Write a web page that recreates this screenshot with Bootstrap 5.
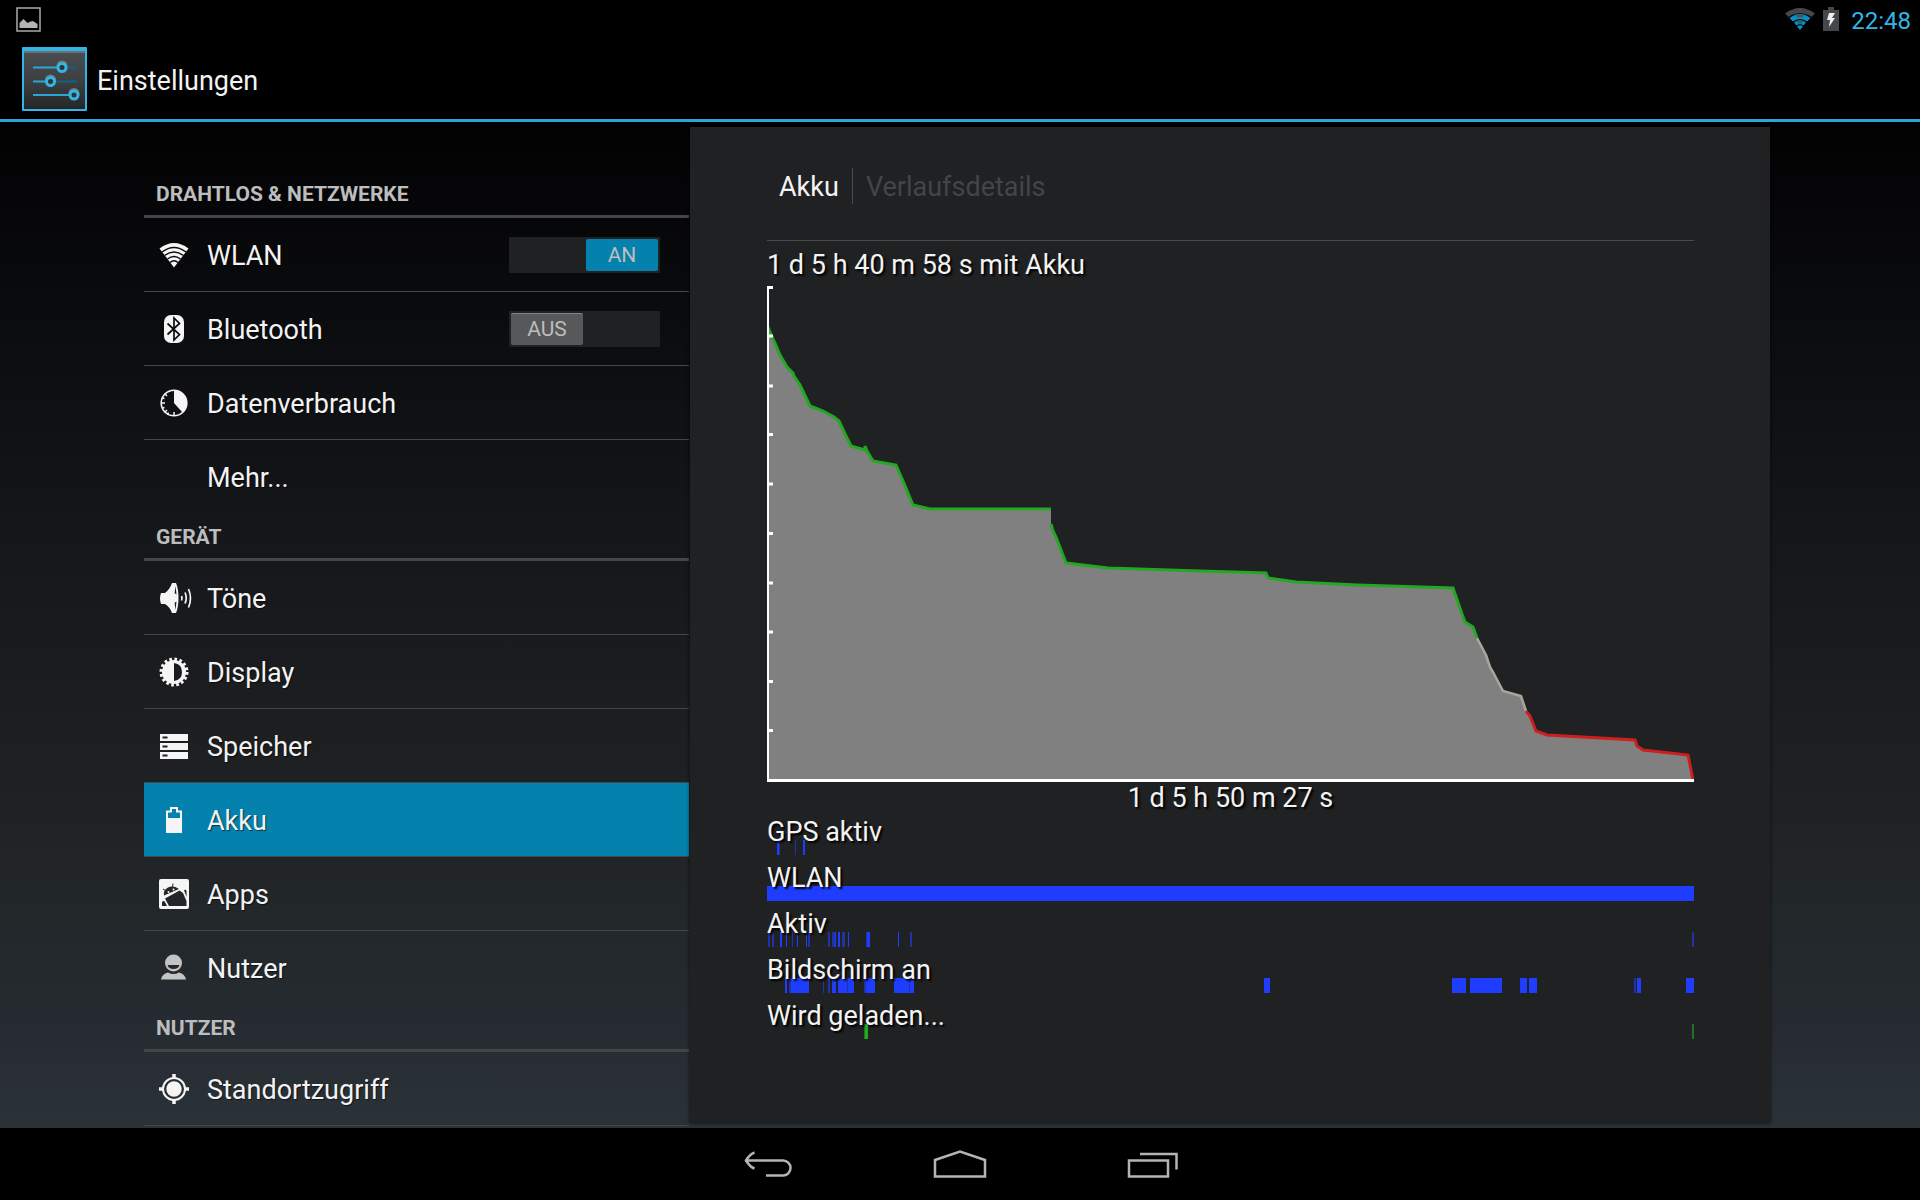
<!DOCTYPE html>
<html lang="de">
<head>
<meta charset="utf-8">
<meta name="viewport" content="width=device-width, initial-scale=1">
<title>Einstellungen</title>
<link rel="stylesheet" href="https://cdn.jsdelivr.net/npm/bootstrap@5.3.0/dist/css/bootstrap.min.css">
<style>
  :root { --holo: #33b5e5; --holo-dark: #0581ad; --bs-body-font-family: Roboto, "Noto Sans", sans-serif; }
  body { background: #000; color: #f3f3f3; font-size: 27px; line-height: 32px; }
  a { color: inherit; text-decoration: none; }
  .statusbar { height: 38px; padding: 0 9px 0 16px; color: var(--holo); font-size: 24px; }
  .statusbar svg, .actionbar svg, .entry svg, .sysnav svg { display: block; flex: none; }
  .actionbar { height: 84px; padding: 0 22px; border-bottom: 3px solid #2ba6d4; }
  .app-title { font-size: 27px; line-height: 32px; padding: 4px 0 0 1px; }
  .stage { display: grid; grid-template-columns: 546fr 1080fr; background: linear-gradient(#020203 0, #14161a 40%, #1d1f21 62%, #22272a 78%, #262b31 90%, #2a3238 100%); padding: 0 150px 0 144px; min-height: 0; }
  .side { min-width: 0; padding: 49px 1px 0 0; overflow: hidden; }
  .panel { min-width: 0; margin: 5px 0; background: #202122; padding: 0 76px 0 77px; box-shadow: 0 0 3px 1px rgba(0,0,0,.45); overflow: hidden; }
  .section-title { height: 47px; margin: 0; padding: 2px 12px 0; font-size: 21px; line-height: 24px; font-weight: 700; color: #bdbdbd; border-bottom: 3px solid #43474a; }
  .entry { height: 74px; padding: 0 29px 0 12px; border-bottom: 1px solid #43474a; }
  .entry.no-line { border-bottom-color: transparent; }
  .entry a { gap: 15px; text-shadow: 1px 1px 1px rgba(0,0,0,.6); }
  .entry a span:last-child { padding-top: 2px; }
  .entry.selected { background: var(--holo-dark); }
  .icon-slot { width: 36px; height: 36px; padding: 3px; flex: none; }
  .toggle { width: 151px; height: 36px; padding: 2px; background: #202123; cursor: pointer; }
  .toggle input { position: absolute; opacity: 0; inset: 0; }
  .toggle .thumb { width: 72px; height: 32px; border-radius: 2px; background: #56585a; color: #bdbdbd; font-size: 21px; line-height: 32px; text-align: center; box-shadow: inset 0 2px 0 -1px #808284; }
  .toggle input:checked ~ .thumb { margin-left: auto; background: var(--holo-dark); box-shadow: none; }
  .toggle .word-on, .toggle input:checked ~ .thumb .word-off { display: none; }
  .toggle input:checked ~ .thumb .word-on { display: inline; }
  .crumbs { padding: 41px 12px 36px; border-bottom: 1px solid #484a4c; }
  .crumbs a { line-height: 34px; padding-top: 2px; }
  .crumbs a + a { color: #434547; border-left: 1px solid #484a4c; margin-left: 13px; padding-left: 13px; }
  .shadowed { text-shadow: 2px 2px 2px #000; }
  .since { padding-top: 8px; margin-bottom: 3px; }
  .plot { display: block; width: 100%; height: 498px; }
  .lane { height: 46px; }
  .lane span { position: relative; z-index: 1; display: block; }
  .lane svg { display: block; width: 100%; height: 15px; margin-top: -8px; }
  .lanes { margin-top: 2px; }
  .sysnav { height: 72px; padding-top: 2px; }
  .sysnav button { width: 192px; border: 0; background: none; }
</style>
<script src="https://cdn.jsdelivr.net/npm/bootstrap@5.3.0/dist/js/bootstrap.bundle.min.js"></script>
</head>
<body class="vh-100 d-flex flex-column overflow-hidden">

<div class="statusbar d-flex align-items-center justify-content-between flex-shrink-0">
  <svg width="25" height="25" viewBox="0 0 25 25"><rect x="1" y="1" width="23" height="23" fill="none" stroke="#aaa" stroke-width="1.5"/><path d="M3.500 21v-5l2-2 2-2 3 3 1 1 2-1 3-1 2 1 3 2v4z" fill="#b4b4b4"/></svg>
  <div class="d-flex align-items-center">
    <svg width="30" height="23" viewBox="0 0 30 23" class="me-2"><path d="M0 5.500Q15-5.500 30 5.500L26.500 9Q15 1.500 3.500 9z" fill="#45484b"/><g fill="#0a8fc4"><path d="M4.500 10Q15 2 25.500 10L22 13.500Q15 8.500 8 13.500z"/><path d="M9 14.500Q15 10 21 14.500L18.500 17.500Q15 15 11.500 17.500z"/><path d="M12 18.500Q15 16 18 18.500L15 22z"/></g><path d="M11 6.500h8l-1 3h-6zM12 12.500h6l-1 3h-4z" fill="#45565f"/></svg>
    <svg width="16" height="24" viewBox="0 0 16 24" class="me-2"><path d="M0 3h5V0h6v3h5v21H0z" fill="#45484b"/><path d="M6 6h6l-3 5h3l-6 9 1-7H4z" fill="#eee"/></svg>
    <span class="ps-1 pt-1">22:48</span>
  </div>
</div>

<header class="actionbar d-flex align-items-center flex-shrink-0">
  <svg width="66" height="66" viewBox="0 0 66 66" class="me-2">
    <defs><linearGradient id="plate" x2="0" y2="1"><stop offset="0" stop-color="#4b4e50"/><stop offset=".55" stop-color="#3c3f41"/><stop offset="1" stop-color="#232526"/></linearGradient></defs>
    <rect x="0" y="1" width="65" height="64" rx="1" fill="#33b5e5"/><rect x="2" y="5" width="61" height="58" fill="url(#plate)"/><path d="M2 6h61" stroke="#8d9193"/>
    <g stroke-width="2" fill="none"><path d="M34 21.500h21M22 35.500h33M46 49h9" stroke="#11617f"/><path d="M11 21.500h26M11 35.500h14M11 49h38" stroke="#2ba6d4"/>
    <g stroke="#77797b" stroke-width="3"><circle cx="40" cy="20" r="4"/><circle cx="28.500" cy="34" r="4"/><circle cx="52" cy="47.500" r="4"/></g>
    <g stroke="#33b5e5" stroke-width="3" fill="#333"><circle cx="40" cy="21.500" r="4"/><circle cx="28.500" cy="35.500" r="4"/><circle cx="52" cy="49" r="4"/></g></g>
  </svg>
  <h1 class="app-title m-0 fw-normal">Einstellungen</h1>
</header>

<main class="stage flex-grow-1">
  <nav class="side" aria-label="Einstellungen">
    <h2 class="section-title d-flex align-items-center">DRAHTLOS &amp; NETZWERKE</h2>
    <div class="entry d-flex align-items-center">
      <a href="#wlan" class="d-flex align-items-center flex-grow-1">
        <svg class="icon-slot" viewBox="0 0 30 30"><path d="M.500 8.500Q15-2.500 29.500 8.500L15 27.500z" fill="#f5f5f5"/><g fill="none" stroke="#0b0c0e" stroke-width="1.500"><path d="M3 12Q15 3 27 12M5.500 15.500Q15 8.500 24.500 15.500M8.500 19Q15 14 21.500 19M11 22.500Q15 19 19 22.500"/></g></svg>
        <span>WLAN</span></a>
      <label class="toggle position-relative d-flex"><input type="checkbox" role="switch" aria-label="WLAN" checked><span class="thumb"><span class="word-on">AN</span><span class="word-off">AUS</span></span></label>
    </div>
    <div class="entry d-flex align-items-center">
      <a href="#bluetooth" class="d-flex align-items-center flex-grow-1">
        <svg class="icon-slot" viewBox="0 0 30 30"><rect x="5" y="1" width="20" height="28" rx="7" fill="#f5f5f5"/><path d="M8.500 9.500l12 11L15 26V4l5.500 5.500-12 11" fill="none" stroke="#0b0c0e" stroke-width="1.700"/></svg>
        <span>Bluetooth</span></a>
      <label class="toggle position-relative d-flex"><input type="checkbox" role="switch" aria-label="Bluetooth"><span class="thumb"><span class="word-on">AN</span><span class="word-off">AUS</span></span></label>
    </div>
    <div class="entry d-flex align-items-center">
      <a href="#daten" class="d-flex align-items-center flex-grow-1">
        <svg class="icon-slot" viewBox="0 0 30 30"><circle cx="15" cy="15" r="12.800" fill="none" stroke="#f5f5f5" stroke-width="1.600"/><path d="M15 15V2a13 13 0 0 1 8.500 22.500z" fill="#f5f5f5"/><path d="M15 28v-4M2 15h4M5.500 5.500l2.500 2.500M5.500 24.500l2.500-2.500M8.500 26.500l1-2M3.500 20l2-.500M3.500 10l2 .500" stroke="#f5f5f5" stroke-width="1.500"/></svg>
        <span>Datenverbrauch</span></a>
    </div>
    <div class="entry no-line d-flex align-items-center">
      <a href="#mehr" class="d-flex align-items-center flex-grow-1"><span class="icon-slot"></span><span>Mehr...</span></a>
    </div>

    <h2 class="section-title d-flex align-items-center">GERÄT</h2>
    <div class="entry d-flex align-items-center">
      <a href="#toene" class="d-flex align-items-center flex-grow-1">
        <svg class="icon-slot overflow-visible" viewBox="0 0 30 30"><path d="M2 10h4Q11 6 13 0h4Q19.500 6 19.500 15T17 30h-4Q11 24 6 21H2Q1 18 1 15.500T2 10z" fill="#f5f5f5"/><path d="M16.500 3Q14.500 15 16.500 27 18.500 15 16.500 3z" fill="#191b1d"/><path d="M15 10.500a4 4.500 0 0 1 0 9z" fill="#f5f5f5"/><path d="M22.500 13q1 2 0 4.500M26 9.500q2.500 5.500 0 11M29.500 6q4 9 0 18.500" fill="none" stroke="#f5f5f5" stroke-width="1.700"/></svg>
        <span>Töne</span></a>
    </div>
    <div class="entry d-flex align-items-center">
      <a href="#display" class="d-flex align-items-center flex-grow-1">
        <svg class="icon-slot" viewBox="0 0 30 30"><circle cx="15" cy="15" r="12.500" fill="none" stroke="#f5f5f5" stroke-width="4" stroke-dasharray="2.600 2.309"/><circle cx="15" cy="15" r="12" fill="#f5f5f5"/><path d="M15 6q8 1 8 9t-8 9z" fill="#191b1d"/></svg>
        <span>Display</span></a>
    </div>
    <div class="entry d-flex align-items-center">
      <a href="#speicher" class="d-flex align-items-center flex-grow-1">
        <svg class="icon-slot" viewBox="0 0 30 30"><path d="M1 3h28v7H1zM1 12h28v7H1zM1 21h28v7H1z" fill="#f5f5f5"/><path d="M3.500 6.500h5M3.500 15.500h5M3.500 24.500h5" stroke="#222" stroke-width="1.800"/></svg>
        <span>Speicher</span></a>
    </div>
    <div class="entry selected d-flex align-items-center">
      <a href="#akku" class="d-flex align-items-center flex-grow-1" aria-current="page">
        <svg class="icon-slot" viewBox="0 0 30 30"><path d="M7 28V5.500h4V2h8v3.500h4V28z" fill="#f5f5f5"/><path d="M9 7.500h4V4h4v3.500h4V13H9z" fill="#0581ad"/></svg>
        <span>Akku</span></a>
    </div>
    <div class="entry d-flex align-items-center">
      <a href="#apps" class="d-flex align-items-center flex-grow-1">
        <svg class="icon-slot" viewBox="0 0 30 30"><rect x="0" y="0" width="30" height="30" rx="2" fill="#f5f5f5"/><g fill="#222628"><path d="M5 16.500Q4 11 9 8.500T20 10z"/><path d="M6 19.500L20.500 11.500 24 14l3.500 8v5H10z"/><path d="M3 23q2-2 3 0l2 4H3z"/><path d="M25 11q2-1 2.500 1v6z"/></g><path d="M13.500 8.500l.500-4M7 12L4 10" stroke="#222628"/><circle cx="9.500" cy="13" r="1" fill="#f5f5f5"/><circle cx="14.500" cy="10.500" r="1" fill="#f5f5f5"/></svg>
        <span>Apps</span></a>
    </div>
    <div class="entry no-line d-flex align-items-center">
      <a href="#nutzer" class="d-flex align-items-center flex-grow-1">
        <svg class="icon-slot" viewBox="0 0 30 30"><ellipse cx="14.500" cy="10" rx="8.500" ry="8.500" fill="#c4c4c4"/><path d="M8.500 12h12q-1 4-6 4t-6-4z" fill="#25292c"/><path d="M2 26.500q1-5.500 7-7 5.500 3 11 0 6 1.500 7 7z" fill="#c4c4c4"/></svg>
        <span>Nutzer</span></a>
    </div>

    <h2 class="section-title d-flex align-items-center">NUTZER</h2>
    <div class="entry d-flex align-items-center">
      <a href="#standort" class="d-flex align-items-center flex-grow-1">
        <svg class="icon-slot" viewBox="0 0 30 30"><circle cx="15" cy="15" r="11" fill="none" stroke="#f5f5f5" stroke-width="2"/><circle cx="15" cy="15" r="7.700" fill="#f5f5f5"/><path d="M15 0v5M15 25v5M0 15h5M25 15h5" stroke="#f5f5f5" stroke-width="3.500"/></svg>
        <span>Standortzugriff</span></a>
    </div>
  </nav>

  <section class="panel">
    <div class="crumbs d-flex"><a href="#akku">Akku</a><a href="#verlauf">Verlaufsdetails</a></div>
    <div class="since shadowed">1 d 5 h 40 m 58 s mit Akku</div>
    <svg class="plot" viewBox="767 284 927 498" preserveAspectRatio="none" role="img" aria-label="Akkuverlauf">
      <path fill="#808080" d="M768 780V327L772 337 775 343 780 355 787 367 793 373 794 376 800 385 810 406 823 411 834 417 839 421 846 436 851 446 864 450 866 451 873 461 896 465 903 481 913 505 930 509H1051V524L1053 531 1056 537 1061 550 1066 563 1108 568 1200 571 1266 573 1268 578 1296 582 1357 585 1453 588 1462 614 1465 622 1473 627 1477 638 1486 655 1490 667 1493 672 1503 691 1521 696 1526 711 1530 716 1536 731 1547 735 1635 740 1637 746 1643 750 1688 755 1693 780z"/>
      <g fill="none" stroke-width="3">
        <path stroke="#24a824" d="M768 327L772 337 775 343 780 355 787 367 793 373 794 376 800 385 810 406 823 411 834 417 839 421 846 436 851 446 865 450V446L867 451 873 461 896 465 903 481 913 505 930 509H1051M1051 524L1053 531 1056 537 1061 550 1066 563 1108 568 1200 571 1266 573 1268 578 1296 582 1357 585 1453 588 1462 614 1465 622 1473 627 1477 638"/>
        <path stroke="#a9a69a" stroke-width="2.500" d="M1477 638L1486 655 1490 667 1493 672 1503 691 1521 696 1526 711"/>
        <path stroke="#cc2020" d="M1526 711L1530 716 1536 731 1547 735 1635 740 1637 746 1643 750 1688 755 1693 780"/>
        <path stroke="#fff" stroke-width="2" d="M768 286V781"/>
        <path stroke="#fff" stroke-width="3" d="M767 287.500h6M768 336h5M768 386h5M768 434.500h5M768 484h5M768 533.500h5M768 583h5M768 632h5M768 681.500h5M768 730.500h5"/>
        <path stroke="#fff" stroke-width="3" d="M767 780.500h927"/>
      </g>
    </svg>
    <div class="text-center shadowed">1 d 5 h 50 m 27 s</div>
    <div class="lanes shadowed">
      <div class="lane"><span>GPS aktiv</span>
        <svg viewBox="767 0 927 15" preserveAspectRatio="none" fill="#1f3dff"><path d="M777 0h2v15h-2zM803 0h2v15h-2z"/><path opacity=".6" d="M779 0h1v15h-1zM795 0h1v15h-1z"/></svg></div>
      <div class="lane"><span>WLAN</span>
        <svg viewBox="767 0 927 15" preserveAspectRatio="none" fill="#1f3dff"><path d="M767 0h927v15h-927z"/></svg></div>
      <div class="lane"><span>Aktiv</span>
        <svg viewBox="767 0 927 15" preserveAspectRatio="none" fill="#1f3dff"><path d="M780 0h2v15h-2zM838 0h2v15h-2zM867 0h3v15h-3zM786 0h1v15h-1zM797 0h1v15h-1zM806 0h1v15h-1zM835 0h1v15h-1zM848 0h1v15h-1zM898 0h1v15h-1z"/><path opacity=".6" d="M768 0h2v15h-2zM772 0h2v15h-2zM792 0h1v15h-1zM808 0h2v15h-2zM828 0h2v15h-2zM832 0h3v15h-3zM842 0h3v15h-3zM866 0h1v15h-1zM910 0h2v15h-2zM1692 0h2v15h-2z"/></svg></div>
      <div class="lane"><span>Bildschirm an</span>
        <svg viewBox="767 0 927 15" preserveAspectRatio="none" fill="#1f3dff"><path d="M785 0h2v15h-2zM791 0h18v15h-18zM832 0h4v15h-4zM838 0h9v15h-9zM848 0h6v15h-6zM866 0h9v15h-9zM894 0h15v15h-15zM910 0h4v15h-4zM1264 0h6v15h-6zM1452 0h14v15h-14zM1470 0h32v15h-32zM1520 0h7v15h-7zM1529 0h8v15h-8zM1637 0h4v15h-4zM1686 0h8v15h-8z"/><path opacity=".6" d="M789 0h2v15h-2zM823 0h1v15h-1zM828 0h2v15h-2zM847 0h1v15h-1zM864 0h2v15h-2zM909 0h1v15h-1zM1634 0h2v15h-2z"/></svg></div>
      <div class="lane"><span>Wird geladen...</span>
        <svg viewBox="767 0 927 15" preserveAspectRatio="none" fill="#24a824"><path d="M865 0h3v15h-3z"/><path opacity=".6" d="M864 0h1v15h-1zM1692 0h2v15h-2z"/></svg></div>
    </div>
  </section>
</main>

<footer class="sysnav d-flex justify-content-center flex-shrink-0">
  <button type="button" aria-label="Zurück" class="d-flex align-items-center justify-content-center p-0"><svg width="50" height="30" viewBox="0 0 50 30" fill="none" stroke="#b4b4b4" stroke-width="2.500"><path d="M2 10.500h38a7.500 7.500 0 0 1 0 15H23M11.500 2.500Q7 4 3 10.500 7 17 11.500 18.500"/></svg></button>
  <button type="button" aria-label="Startseite" class="d-flex align-items-center justify-content-center p-0"><svg width="54" height="30" viewBox="0 0 54 30" fill="none" stroke="#b4b4b4" stroke-width="2.500"><path d="M2 26.500V10L27 1.500 52 10v16.500z" /></svg></button>
  <button type="button" aria-label="Letzte Apps" class="d-flex align-items-center justify-content-center p-0"><svg width="52" height="30" viewBox="0 0 52 30" fill="none" stroke="#b4b4b4" stroke-width="2.500"><path d="M3 10.500h39v16H3zM14 4H50.500V19.500"/></svg></button>
</footer>
</body>
</html>
